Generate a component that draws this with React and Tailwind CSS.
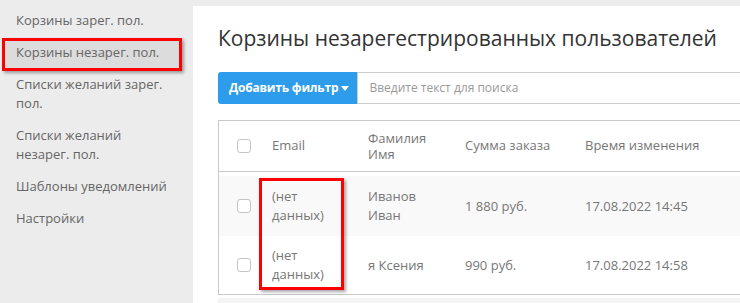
const menu = [
  { label: "Корзины зарег. пол." },
  { label: "Корзины незарег. пол.", active: true },
  { label: "Списки желаний зарег. пол." },
  { label: "Списки желаний незарег. пол." },
  { label: "Шаблоны уведомлений" },
  { label: "Настройки" },
];

const rows = [
  { email: "(нет данных)", name: "Иванов Иван", sum: "1 880 руб.", time: "17.08.2022 14:45", h: "h-[60px]", bg: "bg-[#f9f9f9]" },
  { email: "(нет данных)", name: "я Ксения", sum: "990 руб.", time: "17.08.2022 14:58", h: "h-[58px]", bg: "bg-white" },
];

function Checkbox() {
  return <span className="block w-[14px] h-[14px] rounded-[3px] border border-[#c6c6c6] bg-white" />;
}

function Sidebar() {
  return (
    <aside className="w-[193px] shrink-0 pt-[11px] flex flex-col gap-[13px] text-[13px] leading-[19px] text-[#666]">
      {menu.map((m) =>
        m.active ? (
          <div key={m.label} className="relative px-4">
            {/* выделенный пункт + красная рамка */}
            <span className="absolute left-[2px] w-[180px] -top-[5px] -bottom-[9px] bg-[#dcdcdc] border-[3px] border-[#f00] shadow-[2px_2px_3px_rgba(0,0,0,0.35)]" />
            <span className="relative">{m.label}</span>
          </div>
        ) : (
          <div key={m.label} className="px-4 w-[187px]">
            {m.label}
          </div>
        )
      )}
    </aside>
  );
}

export default function App() {
  return (
    <div className="flex h-[303px] w-[740px] overflow-hidden bg-[#ececec]" style={{ fontFamily: '"Open Sans", sans-serif' }}>
      <Sidebar />

      <main className="mt-[6px] flex-1 min-w-0 bg-white pl-[25px] pt-[17px] overflow-hidden">
        <h1 className="text-[21px] leading-[30px] text-[#333] whitespace-nowrap">
          Корзины незарегестрированных пользователей
        </h1>

        {/* Фильтр */}
        <div className="mt-[19px] flex h-[32px] w-[700px]">
          <button className="flex items-center gap-[3px] bg-[#2d9cea] text-white text-[12px] font-bold tracking-[-0.2px] rounded-l-[3px] pl-[11px] pr-[8px] whitespace-nowrap">
            Добавить фильтр
            <svg width="8" height="5" viewBox="0 0 8 5"><path d="M0 0h8L4 5z" fill="#fff" /></svg>
          </button>
          <div className="flex-1 flex items-center border border-[#ccc] pl-[11px] text-[12px] text-[#999]">
            Введите текст для поиска
          </div>
        </div>

        {/* Таблица */}
        <div className="relative mt-[16px] w-[700px]">
          <div className="border border-[#c9c9c9] text-[13px] text-[#777]">
            <div className="grid grid-cols-[53px_96px_97px_120px_1fr] items-center h-[51px] border-b border-[#c9c9c9]">
              <div className="pl-[18px]"><Checkbox /></div>
              <div>Email</div>
              <div className="w-[70px] leading-[16px]">Фамилия Имя</div>
              <div>Сумма заказа</div>
              <div>Время изменения</div>
            </div>
            <div className="h-[4px]" />
            {rows.map((r, i) => (
              <div key={i} className={`grid grid-cols-[53px_96px_97px_120px_1fr] items-center leading-[19px] ${r.h} ${r.bg}`}>
                <div className="pl-[18px]"><Checkbox /></div>
                <div className="w-[64px]">{r.email}</div>
                <div className="w-[70px]">{r.name}</div>
                <div>{r.sum}</div>
                <div>{r.time}</div>
              </div>
            ))}
          </div>
          <div className="mt-[3px] h-[10px] bg-[#f4f4f4]" />

          {/* красная рамка вокруг email */}
          <span className="absolute left-[41px] top-[58px] w-[85px] h-[112px] border-[3px] border-[#f00] shadow-[2px_2px_3px_rgba(0,0,0,0.35)]" />
        </div>
      </main>
    </div>
  );
}
